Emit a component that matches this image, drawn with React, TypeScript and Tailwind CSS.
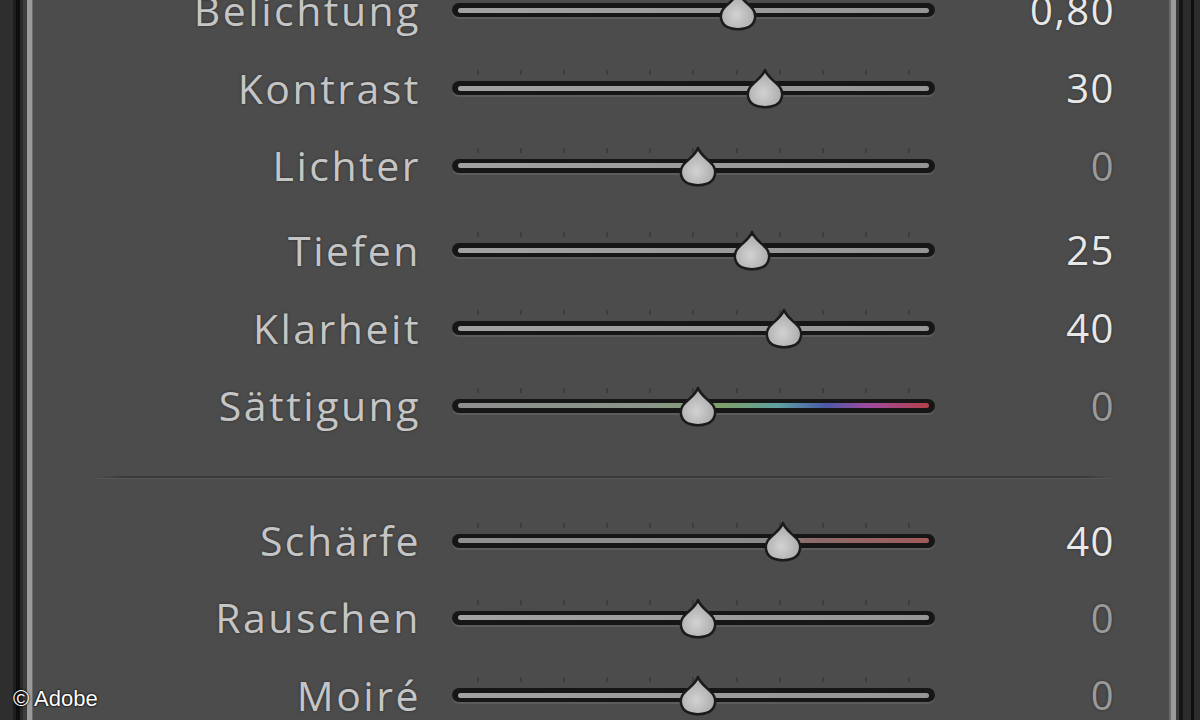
import React from 'react';

type Row = {
  label: string;
  value: string;
  pos: number; // thumb centre in px from the slider's left edge
  dim?: boolean;
  track?: 'plain' | 'saturation' | 'sharpen';
  h: string;
};

const topRows: Row[] = [
  { label: 'Belichtung', value: '0,80', pos: 286, h: 'h-[78px]' },
  { label: 'Kontrast', value: '30', pos: 313, h: 'h-[78px]' },
  { label: 'Lichter', value: '0', pos: 246, dim: true, h: 'h-[77px]' },
];

const midRows: Row[] = [
  { label: 'Tiefen', value: '25', pos: 300, h: 'h-[78px]' },
  { label: 'Klarheit', value: '40', pos: 332, h: 'h-[78px]' },
  { label: 'Sättigung', value: '0', pos: 246, dim: true, track: 'saturation', h: 'h-[77px]' },
];

const detailRows: Row[] = [
  { label: 'Schärfe', value: '40', pos: 331, track: 'sharpen', h: 'h-[77px]' },
  { label: 'Rauschen', value: '0', pos: 246, dim: true, h: 'h-[77px]' },
  { label: 'Moiré', value: '0', pos: 246, dim: true, h: 'h-[78px]' },
];

function Thumb({ pos }: { pos: number }) {
  return (
    <svg
      width="44"
      height="42"
      viewBox="0 0 44 42"
      className="absolute top-1/2 -translate-y-1/2 -translate-x-1/2 mt-[1px]"
      style={{ left: pos }}
    >
      <defs>
        <radialGradient id="thumbFill" cx="45%" cy="62%" r="60%">
          <stop offset="0%" stopColor="#d2d2d2" />
          <stop offset="100%" stopColor="#a8a8a8" />
        </radialGradient>
      </defs>
      <path
        d="M22 2 C24 8 30 12 36 18 C42 25 39 36 30 38 C26 39.5 18 39.5 14 38 C5 36 2 25 8 18 C14 12 20 8 22 2 Z"
        fill="url(#thumbFill)"
        stroke="#1b1b1b"
        strokeWidth="2.5"
        strokeLinejoin="round"
      />
    </svg>
  );
}

function Slider({ pos, track = 'plain' }: { pos: number; track?: Row['track'] }) {
  const inner =
    track === 'saturation'
      ? 'bg-[linear-gradient(to_right,#8e8e8e_0%,#8a958a_40%,#7fa06a_56%,#5fa0a0_68%,#4a5aa8_78%,#a04aa0_87%,#b2404a_100%)]'
      : track === 'sharpen'
        ? 'bg-[linear-gradient(to_right,#8f8f8f_0%,#8a8a8a_68%,#8c6c6c_74%,#a05a5a_100%)]'
        : 'bg-[linear-gradient(to_right,#a2a2a2_0%,#959595_100%)]';

  return (
    <div className="relative w-[483px] h-[40px] flex flex-col justify-center">
      <div className="flex justify-between px-[25px] h-[5px] mb-[6px]">
        {Array.from({ length: 11 }).map((_, i) => (
          <div key={i} className="w-[2px] h-full bg-[#3d3d3d]" />
        ))}
      </div>
      <div className="h-[14px] rounded-full bg-[#161616] px-[6px] flex items-center shadow-[0_2px_0_#5c5c5c]">
        <div className={`h-[5px] w-full rounded-full ${inner}`} />
      </div>
      <div className="h-[11px]" />
      <Thumb pos={pos} />
    </div>
  );
}

function SliderRow({ row }: { row: Row }) {
  return (
    <div className={`${row.h} flex items-center shrink-0`}>
      <div className="w-[388px] -mr-[3px] text-right text-[41px] leading-none tracking-[2.5px] text-[#c5c5c5] [text-shadow:0_0_3px_#2c2c2c]">
        {row.label}
      </div>
      <div className="w-[34px]" />
      <Slider pos={row.pos} track={row.track} />
      <div
        className={`w-[180px] -mr-[2px] text-right text-[40px] leading-none tracking-[1.5px] [text-shadow:0_0_3px_#2c2c2c] ${
          row.dim ? 'text-[#9a9a9a]' : 'text-[#e8e8e8]'
        }`}
      >
        {row.value}
      </div>
    </div>
  );
}

export default function App() {
  return (
    <div className="relative w-[1200px] h-[720px] overflow-hidden flex bg-[#2a2a2a] font-['Open_Sans',sans-serif]">
      {/* left frame */}
      <div className="w-[13px] bg-[#2e2e2e]" />
      <div className="w-[3px] bg-[#1e1e1e]" />
      <div className="w-[4px] bg-[#0e0e0e]" />
      <div className="w-[3px] bg-[#292929]" />
      <div className="w-[4px] bg-[#3c3c3c]" />
      <div className="w-[5px] bg-[#9a9a9a]" />
      <div className="w-[1px] bg-[#6a6a6a]" />

      {/* panel */}
      <div className="w-[1136px] bg-[#4c4c4c] flex flex-col -mt-[29px]">
        {topRows.map(r => <SliderRow key={r.label} row={r} />)}
        <div className="h-[7px] shrink-0" />
        {midRows.map(r => <SliderRow key={r.label} row={r} />)}
        <div className="h-[58px] shrink-0 flex flex-col pt-[32px] pl-[64px] pr-[58px]">
          <div className="h-[2px] bg-[linear-gradient(to_right,#4c4c4c,#383838_3%,#383838_97%,#4c4c4c)]" />
          <div className="h-[1px] bg-[#575757]" />
        </div>
        {detailRows.map(r => <SliderRow key={r.label} row={r} />)}
      </div>

      {/* right frame */}
      <div className="w-[2px] bg-[#6a6a6a]" />
      <div className="w-[5px] bg-[#9a9a9a]" />
      <div className="w-[3px] bg-[#3a3a3a]" />
      <div className="w-[4px] bg-[#151515]" />
      <div className="w-[8px] bg-[#2c2c2c]" />
      <div className="w-[3px] bg-[#0e0e0e]" />
      <div className="flex-1 bg-[#2c2c2c]" />

      <div className="absolute left-[13px] bottom-[10px] text-[22px] leading-none text-white font-['Liberation_Sans',Arial,sans-serif] [text-shadow:0_0_2px_#000,0_0_2px_#000]">
        © Adobe
      </div>
    </div>
  );
}
